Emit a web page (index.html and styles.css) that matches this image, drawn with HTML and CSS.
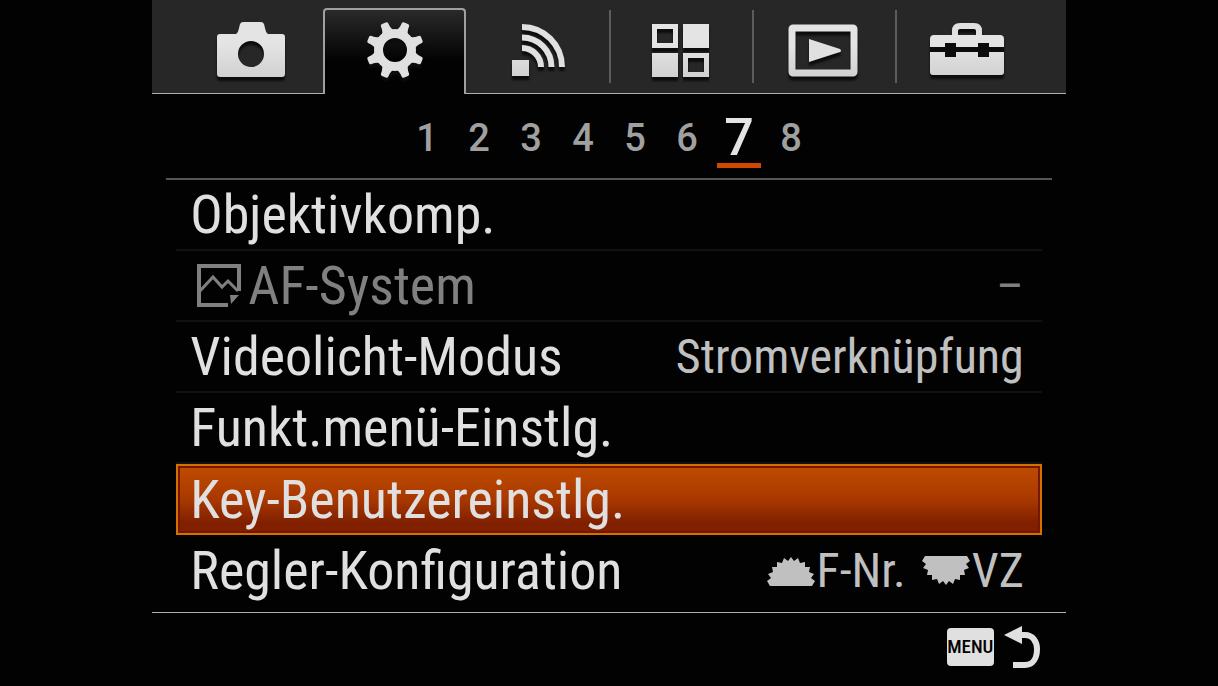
FILE: index.html
```html
<!DOCTYPE html>
<html lang="de">
<head>
    <meta charset="UTF-8">
    <meta name="viewport" content="width=device-width, initial-scale=1.0">
    <title>Kameramenü</title>
    <link rel="stylesheet" href="styles.css">
</head>
<body>
    <svg class="defs" width="0" height="0" aria-hidden="true">
        <defs>
            <linearGradient id="metal" x1="0" y1="0" x2="0" y2="60" gradientUnits="userSpaceOnUse">
                <stop offset="0.4" stop-color="#e4e4e4"/>
                <stop offset="1" stop-color="#cfcfcf"/>
            </linearGradient>
            <path id="tooth" d="M33 12Q36 9 36 3Q36 1 38 1H42Q44 1 44 3Q44 9 47 12Z"/>
            <path id="dial" d="M0 26L4 23L1 19L6 17L5 12L10 12L10 7L15 8L17 3L21 6L24 2L27 6L31 3L33 8L38 7L38 12L43 12L42 17L47 19L44 23L48 26L45 31H3Z"/>
        </defs>
    </svg>
    <div class="screen">
        <nav class="tabs">
            <button class="tab" aria-label="Kamera">
                <svg class="tab-icon" viewBox="0 0 80 60">
                    <path fill="url(#metal)" fill-rule="evenodd" d="M8 14H24Q26 13 27 8L28 4Q29 2 31 2H49Q51 2 52 4L53 8Q54 13 56 14H70Q73 14 73 17V54Q73 57 70 57H8Q5 57 5 54V17Q5 14 8 14ZM39 21A13 13 0 1 0 39 47A13 13 0 1 0 39 21Z"/>
                </svg>
            </button>
            <button class="tab active" aria-label="Einstellungen">
                <svg class="tab-icon" viewBox="0 0 80 60">
                    <circle cx="40" cy="30" r="16.500" fill="none" stroke="#e0e0e0" stroke-width="9"/>
                    <g fill="#e0e0e0">
                        <use href="#tooth" transform="rotate(22.5 40 30)"/>
                        <use href="#tooth" transform="rotate(67.5 40 30)"/>
                        <use href="#tooth" transform="rotate(112.5 40 30)"/>
                        <use href="#tooth" transform="rotate(157.5 40 30)"/>
                        <use href="#tooth" transform="rotate(202.5 40 30)"/>
                        <use href="#tooth" transform="rotate(247.5 40 30)"/>
                        <use href="#tooth" transform="rotate(292.5 40 30)"/>
                        <use href="#tooth" transform="rotate(337.5 40 30)"/>
                    </g>
                </svg>
            </button>
            <button class="tab" aria-label="Drahtlos">
                <svg class="tab-icon" viewBox="0 0 80 60">
                    <path fill="url(#metal)" d="M14 40H31V56H14Z"/>
                    <path fill="none" stroke="#e0e0e0" stroke-width="6" d="M24 7A40 40 0 0 1 64 47M24 17.500A29.500 29.500 0 0 1 53.500 47M24 28A19 19 0 0 1 43 47"/>
                </svg>
            </button>
            <button class="tab" aria-label="Applikation">
                <svg class="tab-icon" viewBox="0 0 80 60">
                    <path fill="url(#metal)" fill-rule="evenodd" d="M12 4H38V28H12ZM17 9V23H33V9ZM43 4H69V28H43ZM12 33H38V57H12ZM43 33H69V57H43ZM48 38V52H64V38Z"/>
                </svg>
            </button>
            <button class="tab" aria-label="Wiedergabe">
                <svg class="tab-icon" viewBox="0 0 80 60">
                    <rect x="9" y="8" width="62" height="45" rx="1" fill="none" stroke="url(#metal)" stroke-width="7" stroke-linejoin="round"/>
                    <path fill="#e0e0e0" d="M26 19L57 29Q59 31 57 32L26 42Z"/>
                </svg>
            </button>
            <button class="tab" aria-label="Setup">
                <svg class="tab-icon" viewBox="0 0 80 60">
                    <path fill="#0c0c0c" d="M4 24H78V36H4Z"/>
                    <path fill="none" stroke="#e0e0e0" stroke-width="6" d="M29 16V11Q29 6 34 6H48Q53 6 53 11V16"/>
                    <path fill="url(#metal)" d="M8 15H74Q78 15 78 19V27H63V23H52V27H30V23H19V27H4V19Q4 15 8 15ZM4 32H19V37H30V32H52V37H63V32H78V52Q78 55 75 55H7Q4 55 4 52Z"/>
                </svg>
            </button>
        </nav>
        <nav class="pages">
            <a class="page" href="#">1</a>
            <a class="page" href="#">2</a>
            <a class="page" href="#">3</a>
            <a class="page" href="#">4</a>
            <a class="page" href="#">5</a>
            <a class="page" href="#">6</a>
            <a class="page current" href="#">7</a>
            <a class="page" href="#">8</a>
        </nav>
        <main class="menu">
            <button class="item"><span class="label">Objektivkomp.</span></button>
            <button class="item disabled" disabled>
                <span class="label">
                    <svg class="still-icon" viewBox="0 0 44 44">
                        <path fill="none" stroke="#808080" stroke-width="4" d="M42 27V2H2V41H31"/>
                        <path fill="none" stroke="#808080" stroke-width="3" d="M2 28L16 13L25 23L31 17L41 27"/>
                        <path fill="#808080" d="M33 31H42L34 40Z"/>
                    </svg>AF-System</span>
                <span class="value">–</span>
            </button>
            <button class="item">
                <span class="label">Videolicht-Modus</span>
                <span class="value">Stromverknüpfung</span>
            </button>
            <button class="item"><span class="label">Funkt.menü-Einstlg.</span></button>
            <button class="item selected"><span class="label">Key-Benutzereinstlg.</span></button>
            <button class="item">
                <span class="label">Regler-Konfiguration</span>
                <span class="value dials">
                    <span class="dial"><svg class="dial-icon" viewBox="0 0 48 32"><use href="#dial"/></svg>F-Nr.</span>
                    <span class="dial"><svg class="dial-icon" viewBox="0 0 48 32"><use href="#dial" transform="rotate(180 24 16)"/></svg>VZ</span>
                </span>
            </button>
        </main>
        <footer class="bottom">
            <button class="back" aria-label="Zurück">
                <span class="menu-key">MENU</span>
                <svg class="back-icon" viewBox="0 0 36 44">
                    <path fill="#e0e0e0" d="M0 10L18 1V19Z"/>
                    <path fill="none" stroke="#e0e0e0" stroke-width="6" d="M16 10H21C29 10 33 17 33 24C33 33 29 40 21 40H9"/>
                </svg>
            </button>
        </footer>
    </div>
</body>
</html>
```
FILE: styles.css
```css
* {
    box-sizing: border-box;
}

body {
    margin: 0;
    min-height: 100vh;
    background-color: #020202;
    color: #e0e0e0;
    font-family: "Roboto Condensed", "Liberation Sans Narrow", "Liberation Sans", sans-serif;
}

button {
    margin: 0;
    padding: 0;
    border: none;
    background: none;
    color: inherit;
    font: inherit;
}

.defs {
    position: absolute;
}

.screen {
    width: 75%;
    margin: 0 auto;
}

/* Tabs */
.tabs {
    display: grid;
    grid-template-columns: repeat(6, 1fr);
    height: 94px;
    padding: 8px 28px 0;
    background-color: #272727;
    box-shadow: inset 0 -1px #b0b0b0;
}

.tab {
    display: flex;
    justify-content: center;
    padding-top: 12px;
}

.tab-icon {
    width: 80px;
    height: 60px;
    overflow: visible;
    filter: drop-shadow(0 4px 1px #0c0c0c);
}

.tab.active {
    border: 2px solid #a0a0a0;
    border-bottom: none;
    border-radius: 4px 4px 0 0;
    background: linear-gradient(#2a2a2a, #020202 60%);
    padding-top: 10px;
}

.tab:nth-child(n + 4) {
    background: linear-gradient(#5c5c5c, #5c5c5c) left 2px / 2px 73px no-repeat;
}

/* Page numbers */
.pages {
    display: flex;
    justify-content: center;
    height: 86px;
    margin: 0 14px;
    border-bottom: 2px solid #555;
    font-family: Roboto, sans-serif;
    font-size: 38px;
    font-weight: 500;
    line-height: 88px;
}

.page {
    width: 44px;
    height: 74px;
    margin: 0 4px;
    color: #a0a0a0;
    text-align: center;
    text-decoration: none;
}

.page.current {
    border-bottom: 5px solid #d04800;
    color: #e4e4e4;
    font-size: 52px;
}

/* Menu items */
.menu {
    padding: 0 24px 6px;
}

.item {
    display: flex;
    justify-content: space-between;
    align-items: center;
    width: 100%;
    height: 71px;
    padding: 0 18px 0 14px;
    border-bottom: 2px solid #111;
    font-size: 54px;
    line-height: 64px;
    white-space: nowrap;
}

.label {
    display: flex;
    align-items: center;
}

.value {
    color: #c0c0c0;
    font-size: 48px;
}

.item.disabled .label,
.item.disabled .value {
    color: #808080;
}

.item.selected {
    padding: 0 16px 0 12px;
    border: 2px solid #d87000;
    background: linear-gradient(#c04c00, #a83800 50%, #802000 85%);
    box-shadow: inset 0 0 0 2px #701800;
}

.item:last-child {
    border-bottom: none;
}

.still-icon {
    width: 44px;
    height: 44px;
    margin: 0 7px;
}

.dials {
    display: flex;
    gap: 16px;
}

.dial {
    display: flex;
    align-items: center;
}

.dial-icon {
    width: 48px;
    height: 32px;
    margin-right: 2px;
    fill: #c0c0c0;
}

/* Footer */
.bottom {
    display: flex;
    justify-content: flex-end;
    padding: 12px 26px 0;
    border-top: 1px solid #b0b0b0;
}

.back {
    display: flex;
    align-items: center;
    gap: 10px;
}

.menu-key {
    width: 47px;
    border-radius: 4px;
    background-color: #e0e0e0;
    color: #020202;
    font-size: 19px;
    font-weight: 500;
    line-height: 38px;
    text-align: center;
}

.back-icon {
    width: 36px;
    height: 44px;
}
```
